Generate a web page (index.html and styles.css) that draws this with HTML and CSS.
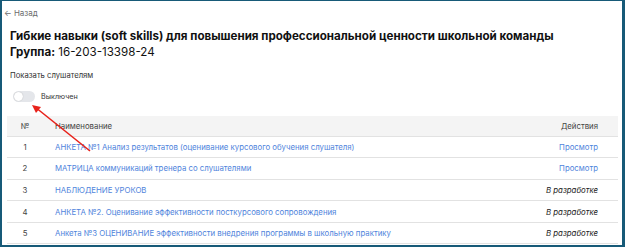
FILE: index.html
```html
<!DOCTYPE html>
<html lang="ru">
<head>
    <meta charset="UTF-8">
    <title>Группа 16-203-13398-24</title>
    <link rel="stylesheet" href="styles.css">
</head>
<body>
<div class="frame">
    <a class="back" href="#">&larr; Назад</a>
    <h1 class="title">Гибкие навыки (soft skills) для повышения профессиональной ценности школьной команды</h1>
    <div class="group"><b>Группа:</b> 16-203-13398-24</div>

    <div class="show-label">Показать слушателям</div>
    <div class="toggle-row">
        <span class="toggle"><span class="knob"></span></span>
        <span class="toggle-text">Выключен</span>
    </div>

    <table class="forms">
        <thead>
            <tr><th class="num">№</th><th class="name">Наименование</th><th class="act">Действия</th></tr>
        </thead>
        <tbody>
            <tr><td class="num">1</td><td class="name"><a href="#">АНКЕТА №1 Анализ результатов (оценивание курсового обучения слушателя)</a></td><td class="act"><a href="#">Просмотр</a></td></tr>
            <tr><td class="num">2</td><td class="name"><a href="#">МАТРИЦА коммуникаций тренера со слушателями</a></td><td class="act"><a href="#">Просмотр</a></td></tr>
            <tr><td class="num">3</td><td class="name"><a href="#">НАБЛЮДЕНИЕ УРОКОВ</a></td><td class="act"><i>В разработке</i></td></tr>
            <tr><td class="num">4</td><td class="name"><a href="#">АНКЕТА №2. Оценивание эффективности посткурсового сопровождения</a></td><td class="act"><i>В разработке</i></td></tr>
            <tr><td class="num">5</td><td class="name"><a href="#">Анкета №3 ОЦЕНИВАНИЕ эффективности внедрения программы в школьную практику</a></td><td class="act"><i>В разработке</i></td></tr>
        </tbody>
    </table>

    <svg class="pointer" width="70" height="56" viewBox="0 0 70 56">
        <line x1="6" y1="5" x2="61" y2="49" stroke="#e8221b" stroke-width="1.6"/>
        <polygon points="3,3 12,5 7,11" fill="#e8221b"/>
    </svg>
</div>
</body>
</html>
```

FILE: styles.css
```css
* {
    box-sizing: border-box;
}
body {
    margin: 0;
    font-family: Inter, "Noto Sans", sans-serif;
    color: #1a1a1a;
    background: #ffffff;
}
.frame {
    position: relative;
    width: 625px;
    height: 247px;
    border-style: solid;
    border-color: #175a78;
    border-width: 1px 3px 2px 2px;
    padding: 6px 4px 0 5px;
    overflow: hidden;
}
.back {
    display: block;
    margin-left: -3px;
    font-size: 8px;
    color: #6b6b6b;
    text-decoration: none;
    line-height: 12px;
}
.title {
    margin: 9px 0 0 3px;
    font-size: 11.6px;
    font-weight: 700;
    line-height: 16px;
    color: #111;
    white-space: nowrap;
}
.group {
    margin-left: 3px;
    font-size: 11.6px;
    line-height: 16px;
    color: #111;
}
.group b {
    font-weight: 700;
}
.show-label {
    margin: 10px 0 0 3px;
    font-size: 7.7px;
    color: #333;
    line-height: 12px;
}
.toggle-row {
    display: flex;
    align-items: center;
    gap: 6px;
    margin: 8px 0 0 6px;
    height: 12px;
}
.toggle {
    display: inline-block;
    width: 22px;
    height: 11px;
    border-radius: 6px;
    background: #e4e6ea;
    position: relative;
}
.knob {
    position: absolute;
    left: 1px;
    top: 1px;
    width: 9px;
    height: 9px;
    border-radius: 50%;
    background: #fff;
    box-shadow: 0 0 1px rgba(0,0,0,0.3);
}
.toggle-text {
    font-size: 7.2px;
    color: #333;
}
.forms {
    width: 611px;
    margin: 14px 0 0 0;
    border-collapse: collapse;
    font-size: 7.8px;
}
.forms th {
    background: #f4f4f4;
    font-weight: 400;
    color: #444;
    height: 20px;
    border-bottom: 1px solid #e2e2e2;
}
.forms td {
    height: 21.6px;
    border-bottom: 1px solid #e2e2e2;
    color: #444;
}
.forms .num {
    width: 36px;
    text-align: center;
}
.forms .name {
    text-align: left;
    padding-left: 12px;
}
.forms .act {
    text-align: right;
    padding-right: 20px;
    width: 120px;
}
.forms a {
    color: #4f84dc;
    text-decoration: none;
}
.forms i {
    color: #222;
}
.pointer {
    position: absolute;
    left: 27px;
    top: 101px;
}
```
